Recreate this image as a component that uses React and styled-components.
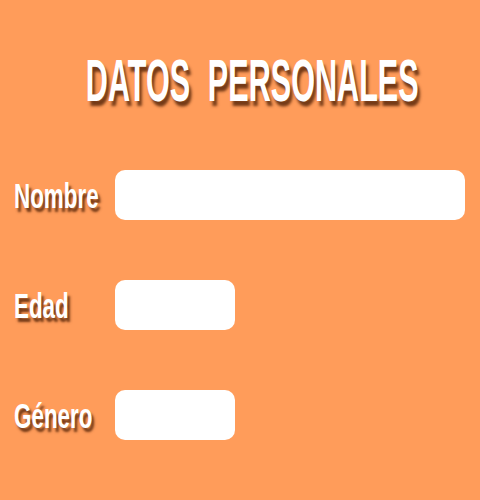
import styled, { createGlobalStyle } from "styled-components";

const GlobalStyle = createGlobalStyle`
  html, body {
    margin: 0;
    padding: 0;
    background: #ff9c5a;
  }
`;

const fields = [
  { label: "Nombre", width: 350 },
  { label: "Edad", width: 120 },
  { label: "Género", width: 120 },
];

export default function App() {
  return (
    <Page>
      <GlobalStyle />
      <Title>
        <TitleText>DATOS PERSONALES</TitleText>
      </Title>
      <Form>
        {fields.map((f) => (
          <Row key={f.label}>
            <Label>
              <LabelText>{f.label}</LabelText>
            </Label>
            <Field type="text" $width={f.width} />
          </Row>
        ))}
      </Form>
    </Page>
  );
}

const Page = styled.div`
  width: 480px;
  height: 500px;
  background: #ff9c5a;
  overflow: hidden;
  font-family: "Liberation Sans", Arial, sans-serif;
  color: #fff;
`;

const Title = styled.h1`
  display: flex;
  justify-content: center;
  margin: 51px 0 0;
  padding-left: 24px;
  height: 60px;
  font-size: 60px;
  line-height: 60px;
  font-weight: 700;
  white-space: nowrap;
`;

const TitleText = styled.span`
  display: inline-block;
  flex-shrink: 0;
  transform: scaleX(0.51);
  word-spacing: 18px;
  text-shadow: 5px 5px 4px rgba(90, 40, 10, 0.85);
`;

const Form = styled.div`
  display: flex;
  flex-direction: column;
  gap: 60px;
  margin-top: 59px;
  padding-left: 14px;
`;

const Row = styled.div`
  display: flex;
  align-items: center;
  height: 50px;
`;

const Label = styled.label`
  width: 101px;
  flex-shrink: 0;
  font-size: 35px;
  line-height: 35px;
  font-weight: 700;
  white-space: nowrap;
`;

const LabelText = styled.span`
  display: inline-block;
  transform: scaleX(0.64);
  transform-origin: left center;
  text-shadow: 4px 4px 3px rgba(90, 40, 10, 0.85);
`;

const Field = styled.input`
  width: ${({ $width }) => $width}px;
  height: 50px;
  box-sizing: border-box;
  border: none;
  border-radius: 10px;
  background: #fff;
  outline: none;
  padding: 0 10px;
  font-size: 18px;
`;
